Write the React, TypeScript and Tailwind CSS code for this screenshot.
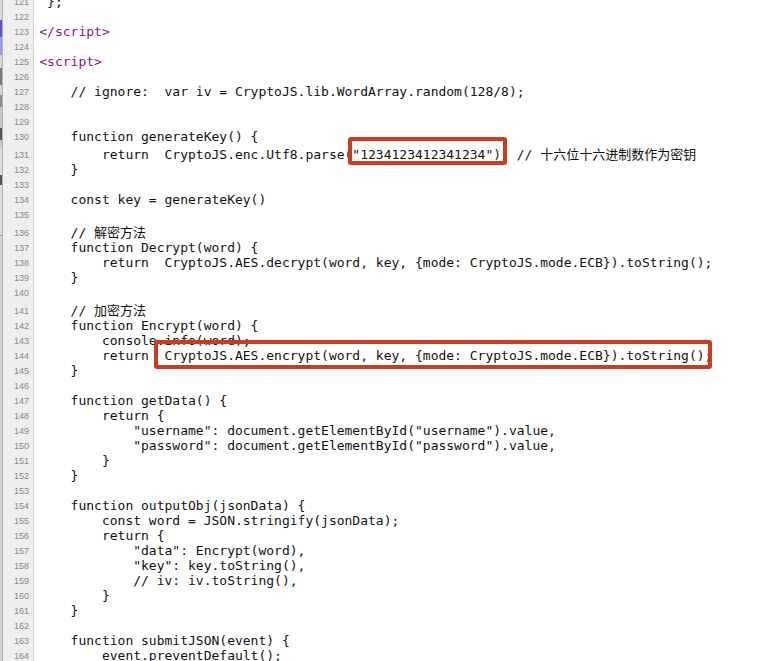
import React from 'react';

interface Line {
  n: number;
  text: string;
  cjk?: boolean;
  tag?: boolean;
}

const lines: Line[] = [
  { n: 121, text: ' };' },
  { n: 122, text: '' },
  { n: 123, text: '</script>', tag: true },
  { n: 124, text: '' },
  { n: 125, text: '<script>', tag: true },
  { n: 126, text: '' },
  { n: 127, text: '    // ignore:  var iv = CryptoJS.lib.WordArray.random(128/8);' },
  { n: 128, text: '' },
  { n: 129, text: '' },
  { n: 130, text: '    function generateKey() {' },
  { n: 131, text: '        return  CryptoJS.enc.Utf8.parse("1234123412341234")  // 十六位十六进制数作为密钥', cjk: true },
  { n: 132, text: '    }' },
  { n: 133, text: '' },
  { n: 134, text: '    const key = generateKey()' },
  { n: 135, text: '' },
  { n: 136, text: '    // 解密方法', cjk: true },
  { n: 137, text: '    function Decrypt(word) {' },
  { n: 138, text: '        return  CryptoJS.AES.decrypt(word, key, {mode: CryptoJS.mode.ECB}).toString();' },
  { n: 139, text: '    }' },
  { n: 140, text: '' },
  { n: 141, text: '    // 加密方法', cjk: true },
  { n: 142, text: '    function Encrypt(word) {' },
  { n: 143, text: '        console.info(word);' },
  { n: 144, text: '        return  CryptoJS.AES.encrypt(word, key, {mode: CryptoJS.mode.ECB}).toString();' },
  { n: 145, text: '    }' },
  { n: 146, text: '' },
  { n: 147, text: '    function getData() {' },
  { n: 148, text: '        return {' },
  { n: 149, text: '            "username": document.getElementById("username").value,' },
  { n: 150, text: '            "password": document.getElementById("password").value,' },
  { n: 151, text: '        }' },
  { n: 152, text: '    }' },
  { n: 153, text: '' },
  { n: 154, text: '    function outputObj(jsonData) {' },
  { n: 155, text: '        const word = JSON.stringify(jsonData);' },
  { n: 156, text: '        return {' },
  { n: 157, text: '            "data": Encrypt(word),' },
  { n: 158, text: '            "key": key.toString(),' },
  { n: 159, text: '            // iv: iv.toString(),' },
  { n: 160, text: '        }' },
  { n: 161, text: '    }' },
  { n: 162, text: '' },
  { n: 163, text: '    function submitJSON(event) {' },
  { n: 164, text: '        event.preventDefault();' },
];

// bits of the window behind, peeking out on the far left
const SideStrip = () => (
  <div className="flex w-[3px] shrink-0 flex-col border-r border-[#b2b2b2] bg-[#d4d4d4]">
    <div className="h-[20px] bg-[#dadada]" />
    <div className="h-[17px] bg-[#5a50d4]" />
    <div className="h-[18px] bg-[#9a9ee0]" />
    <div className="h-[13px]" />
    <div className="h-[17px] bg-[#7a7a7a]" />
    <div className="h-[10px]" />
    <div className="h-[12px] bg-[#8a8a8a]" />
    <div className="h-[21px] bg-[#c6c6ca]" />
    <div className="h-[12px] bg-[#555]" />
    <div className="h-[8px] bg-[#c6c6ca]" />
    <div className="h-[27px] bg-[#dcdcdc]" />
    <div className="h-[10px] bg-[#555]" />
    <div className="h-[50px] bg-[#dcdcdc]" />
    <div className="h-px bg-[#9a9a9a]" />
    <div className="flex-1 bg-[#d2d2d2]" />
  </div>
);

export default function App() {
  return (
    <div className="relative flex h-[661px] w-[761px] overflow-hidden bg-white">
      <SideStrip />
      <div className="-mt-[6.5px] flex-1">
        {lines.map((line) => (
          <div key={line.n} className={`flex ${line.cjk ? 'h-[18px]' : 'h-[15px]'}`}>
            {/* gutter */}
            <div className="w-[31px] shrink-0 border-r border-[#cdcdcd] bg-[#eeeeee] pr-[4px] text-right font-['Liberation_Sans',Arial,sans-serif] text-[9px] leading-[15px] text-[#888888]">
              <span className={`block ${line.cjk ? 'pt-[4.5px]' : 'pt-[1.5px]'}`}>{line.n}</span>
            </div>
            <div
              className={`whitespace-pre pl-[5.3px] font-[family-name:'DejaVu_Sans_Mono','Noto_Sans_CJK_SC',monospace] text-[13px] leading-[15px] ${
                line.cjk ? 'pt-[3px]' : ''
              } ${line.tag ? 'text-[#881391]' : 'text-[#111]'}`}
            >
              {line.text}
            </div>
          </div>
        ))}
      </div>

      {/* highlight boxes drawn over the code */}
      <div className="absolute left-[348px] top-[137px] h-[28px] w-[159px] rounded-[3px] border-[4px] border-[#cd3a20]" />
      <div className="absolute left-[154px] top-[340px] h-[29px] w-[558px] rounded-[3px] border-[4px] border-[#cd3a20]" />
    </div>
  );
}
